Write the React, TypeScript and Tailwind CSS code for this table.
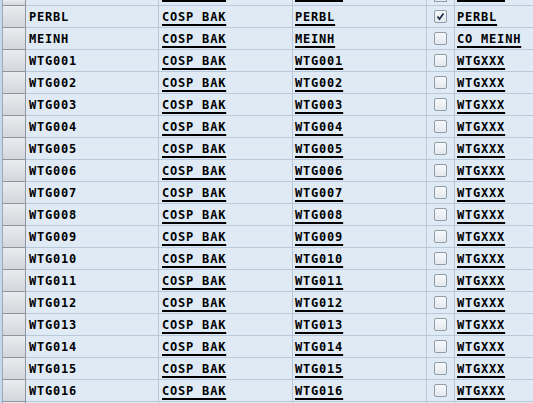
import React from 'react';

type Row = { f: string; t: string; n: string; c: boolean; m: string };

const rows: Row[] = [
  { f: 'PERBL', t: 'COSP BAK', n: 'PERBL', c: true, m: 'PERBL' },
  { f: 'MEINH', t: 'COSP BAK', n: 'MEINH', c: false, m: 'CO MEINH' },
  ...Array.from({ length: 16 }, (_, i) => {
    const id = 'WTG' + String(i + 1).padStart(3, '0');
    return { f: id, t: 'COSP BAK', n: id, c: false, m: 'WTGXXX' };
  }),
];

const Check = ({ on }: { on: boolean }) => (
  <div className="w-[13px] h-[13px] rounded-[2px] border border-[#8f9caa] bg-gradient-to-b from-[#f7f9fb] to-[#e4e9ee] flex items-center justify-center">
    {on && (
      <svg width="9" height="9" viewBox="0 0 9 9">
        <path d="M1.5 4.5 L3.5 7 L7.5 1.5" fill="none" stroke="#1f2a44" strokeWidth="1.7" />
      </svg>
    )}
  </div>
);

const Link = ({ children }: { children: React.ReactNode }) => (
  <span className="underline decoration-2 underline-offset-[3px]">{children}</span>
);

const Head = () => (
  <>
    <div className="w-[2px] bg-[#c6d9ec]" />
    <div className="w-[24px] border-l border-[#9aaabb] border-r border-r-[#8d96a0] border-b border-b-[#8e959c] bg-gradient-to-b from-[#e9ecef] to-[#d3d7db]" />
  </>
);

// only the underlines of the row above peek in at the top edge
const TopRow = () => (
  <div className="flex h-[6px]">
    <Head />
    <div className="w-[133px] border-r border-b border-[#b9c9d9]" />
    <div className="w-[134px] border-r border-b border-[#b9c9d9] pl-[3px]">
      <div className="w-[64px] h-[2px] bg-black" />
    </div>
    <div className="w-[134px] border-r border-b border-[#b9c9d9] pl-[2px]">
      <div className="w-[48px] h-[2px] bg-black" />
    </div>
    <div className="w-[28px] border-r border-b border-[#b9c9d9] flex justify-center">
      <div className="w-[13px] h-[2px] border-x border-b border-[#8f9caa]" />
    </div>
    <div className="flex-1 border-b border-[#b9c9d9] pl-[2px]">
      <div className="w-[48px] h-[2px] bg-black" />
    </div>
  </div>
);

// the next row just starts at the bottom edge
const BottomRow = () => (
  <div className="flex h-[22px]">
    <Head />
    <div className="w-[133px] border-r border-[#b9c9d9]" />
    <div className="w-[134px] border-r border-[#b9c9d9]" />
    <div className="w-[134px] border-r border-[#b9c9d9]" />
    <div className="w-[28px] border-r border-[#b9c9d9]" />
    <div className="flex-1" />
  </div>
);

export default function App() {
  return (
    <div className="w-[533px] h-[403px] overflow-hidden bg-[#dfeaf5]">
      <div
        className="text-[12px] font-bold tracking-[0.8px] text-black"
        style={{ fontFamily: '"DejaVu Sans Mono", "Liberation Mono", monospace' }}>
        <TopRow />
        {rows.map((r, i) => (
          <div key={i} className="flex h-[22px] whitespace-nowrap">
            <Head />
            <div className="w-[133px] border-r border-b border-[#b9c9d9] flex items-center pl-[3px]">
              {r.f}
            </div>
            <div className="w-[134px] border-r border-b border-[#b9c9d9] flex items-center pl-[3px]">
              <Link>{r.t}</Link>
            </div>
            <div className="w-[134px] border-r border-b border-[#b9c9d9] flex items-center pl-[2px]">
              <Link>{r.n}</Link>
            </div>
            <div className="w-[28px] border-r border-b border-[#b9c9d9] flex items-center justify-center">
              <Check on={r.c} />
            </div>
            <div className="flex-1 border-b border-[#b9c9d9] flex items-center pl-[2px]">
              <Link>{r.m}</Link>
            </div>
          </div>
        ))}
        <BottomRow />
      </div>
    </div>
  );
}
